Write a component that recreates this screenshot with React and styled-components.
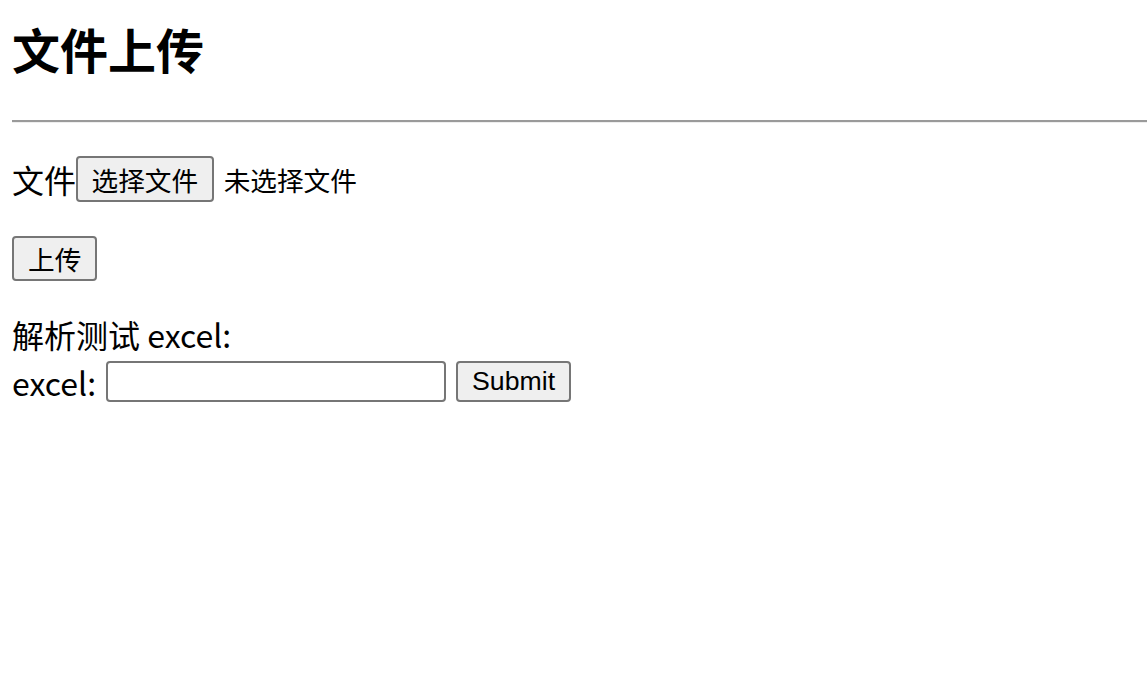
import React from 'react';
import styled, {createGlobalStyle} from 'styled-components';

const GlobalStyle = createGlobalStyle`
  html, body {
    margin: 0;
    padding: 0;
    background: #fff;
    color: #000;
    font-family: "Noto Sans CJK SC", "Noto Sans", sans-serif;
  }
`;

const Page = styled.div`
  display: flex;
  flex-direction: column;
  padding: 20px 0 0 12px;
`;

const Title = styled.h1`
  margin: 0;
  font-size: 48px;
  line-height: 56px;
  font-weight: 700;
`;

const Rule = styled.hr`
  margin: 44px 0 33px 0;
  height: 0;
  border: none;
  border-top: 2px solid #9a9a9a;
  border-bottom: 1px solid #eeeeee;
`;

const Row = styled.div`
  display: flex;
  align-items: center;
  height: ${p => p.h}px;
  margin-top: ${p => p.top || 0}px;
  gap: ${p => p.gap || 0}px;
`;

const Label = styled.span`
  font-size: 32px;
  line-height: 40px;
  white-space: nowrap;
`;

const Hint = styled.span`
  font-size: 26.67px;
  margin-left: 10px;
`;

const Button = styled.button`
  box-sizing: border-box;
  height: ${p => p.h || 46}px;
  padding: 0 ${p => p.px || 12}px;
  font-family: "Liberation Sans", "Noto Sans CJK SC", sans-serif;
  font-size: 26.67px;
  color: #000;
  background: #efefef;
  border: 2px solid #767676;
  border-radius: 4px;
  display: flex;
  align-items: center;
`;

const TextInput = styled.input`
  box-sizing: border-box;
  width: 340px;
  height: 41px;
  border: 2px solid #767676;
  border-radius: 4px;
  background: #fff;
  padding: 2px 4px;
  font-size: 26px;
`;

export default function App() {
    return (
        <>
            <GlobalStyle/>
            <Page>
                <Title>文件上传</Title>
                <Rule/>
                <Row h={46}>
                    <Label>文件</Label>
                    <Button px={13.5}>选择文件</Button>
                    <Hint>未选择文件</Hint>
                </Row>
                <Row h={45} top={34}>
                    <Button h={45} px={14}>上传</Button>
                </Row>
                <Row h={40} top={33}>
                    <Label>解析测试 excel:</Label>
                </Row>
                <Row h={41} top={7} gap={10}>
                    <Label>excel:</Label>
                    <TextInput type="text"/>
                    <Button h={41} px={14}>Submit</Button>
                </Row>
            </Page>
        </>
    );
}
